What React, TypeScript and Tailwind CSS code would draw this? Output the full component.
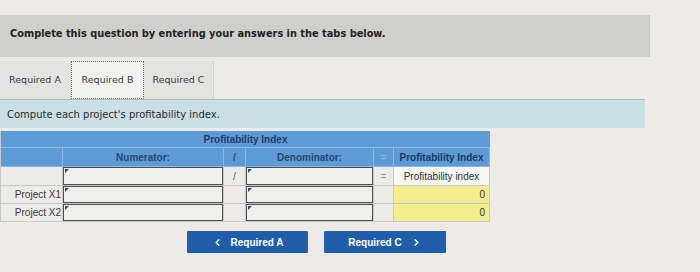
import { JSX } from "react";
import { ChevronLeft, ChevronRight } from "lucide-react";

const cellBase = "border-r border-b border-[#c9c9c6] flex items-center";

// tiny marker in the top-left corner of each answer box
const Marker = () => (
  <span className="absolute left-[1px] top-[1px] w-0 h-0 border-t-[4px] border-r-[4px] border-t-[#1f4f8f] border-r-transparent" />
);

const InputCell = ({ className = "" }: { className?: string }) => (
  <div className={`relative border-b border-r border-[#c9c9c6] p-0 ${className}`}>
    <div className="relative h-full w-full border-[1.5px] border-[#4f4f4f] bg-[#efefec]">
      <Marker />
    </div>
  </div>
);

const Tab = ({ label, active }: { label: string; active?: boolean }): JSX.Element => (
  <div
    className={
      active
        ? "w-[73px] h-full flex items-center justify-center bg-[#f1f1ee] border border-dotted border-[#6b6b6b]"
        : "h-full flex items-center justify-center bg-[#e3e3e0] border-r border-[#d3d3d0]"
    }
  >
    <span className="text-[9.5px] text-[#3a3a3a]">{label}</span>
  </div>
);

export default function App() {
  return (
    <div className="w-[700px] h-[272px] bg-[#ecebe7] overflow-hidden font-['DejaVu_Sans',sans-serif]">
      <div className="mt-[15px] w-[650px] h-[42px] bg-[#cfcfcc] flex items-center pl-[10px] pb-[4px]">
        <span className="text-[9.8px] font-bold text-[#222]">
          Complete this question by entering your answers in the tabs below.
        </span>
      </div>

      <div className="mt-[4px] h-[38px] flex w-[650px]">
        <div className="w-[71px]"><Tab label="Required A" /></div>
        <Tab label="Required B" active />
        <div className="w-[70px]"><Tab label="Required C" /></div>
      </div>

      <div className="w-[645px] h-[29px] bg-[#c9dfe5] border-t border-[#a9b9bd] flex items-center pl-[7px]">
        <span className="text-[10px] text-[#2c2c2c]">Compute each project's profitability index.</span>
      </div>

      <div className="mt-[3px] w-[489px] grid grid-cols-[62px_161px_22px_128px_20px_96px] grid-rows-[17px_19px_19px_18px_18px] font-['Liberation_Sans',Arial,sans-serif] text-[10px] border-l border-[#c9c9c6]">
        {/* header row spanning the whole table */}
        <div className="col-span-6 bg-[#5d9bd6] flex items-center justify-center border-b border-[#8cb7e2]">
          <span className="font-bold text-[#1d3c69]">Profitability Index</span>
        </div>

        <div className="bg-[#5d9bd6] border-r border-b border-[#8cb7e2]" />
        <div className="bg-[#5d9bd6] border-r border-b border-[#8cb7e2] flex items-center justify-center">
          <span className="font-bold text-[#2a4670]">Numerator:</span>
        </div>
        <div className="bg-[#5d9bd6] border-r border-b border-[#8cb7e2] flex items-center justify-center">
          <span className="font-bold text-[#2a4670]">/</span>
        </div>
        <div className="bg-[#5d9bd6] border-r border-b border-[#8cb7e2] flex items-center justify-center">
          <span className="font-bold text-[#2a4670]">Denominator:</span>
        </div>
        <div className="bg-[#5d9bd6] border-r border-b border-[#8cb7e2] flex items-center justify-center">
          <span className="font-bold text-[#8bb3dc]">=</span>
        </div>
        <div className="bg-[#5d9bd6] border-r border-b border-[#8cb7e2] flex items-center justify-center">
          <span className="font-bold text-[#1a3866]">Profitability Index</span>
        </div>

        {/* formula row */}
        <div className={`${cellBase} bg-[#ecebe8]`} />
        <InputCell />
        <div className={`${cellBase} justify-center bg-[#ecebe8] text-[#555]`}>/</div>
        <InputCell />
        <div className={`${cellBase} justify-center bg-[#ecebe8] text-[#9a9a9a]`}>=</div>
        <div className={`${cellBase} justify-center bg-[#f6f6f3] text-[#333]`}>Profitability index</div>

        {["Project X1", "Project X2"].map((name) => (
          <div key={name} className="contents">
            <div className={`${cellBase} justify-end pr-[1px] bg-[#ecebe8] text-[#3a3a3a]`}>{name}</div>
            <InputCell />
            <div className={`${cellBase} bg-[#ecebe8]`} />
            <InputCell />
            <div className={`${cellBase} bg-[#ecebe8]`} />
            <div className={`${cellBase} justify-end pr-[4px] bg-[#f2ee90] text-[#333]`}>0</div>
          </div>
        ))}
      </div>

      <div className="mt-[9px] flex gap-[16px] pl-[187px] font-['Liberation_Sans',Arial,sans-serif]">
        <button className="w-[121px] h-[22px] bg-[#1f5eab] text-white text-[10px] font-bold flex items-center justify-center gap-[8px] rounded-[1px]">
          <ChevronLeft size={11} strokeWidth={3} />
          <span>Required A</span>
        </button>
        <button className="w-[122px] h-[22px] bg-[#1f5eab] text-white text-[10px] font-bold flex items-center justify-center gap-[9px] rounded-[1px]">
          <span>Required C</span>
          <ChevronRight size={11} strokeWidth={3} />
        </button>
      </div>
    </div>
  );
}
